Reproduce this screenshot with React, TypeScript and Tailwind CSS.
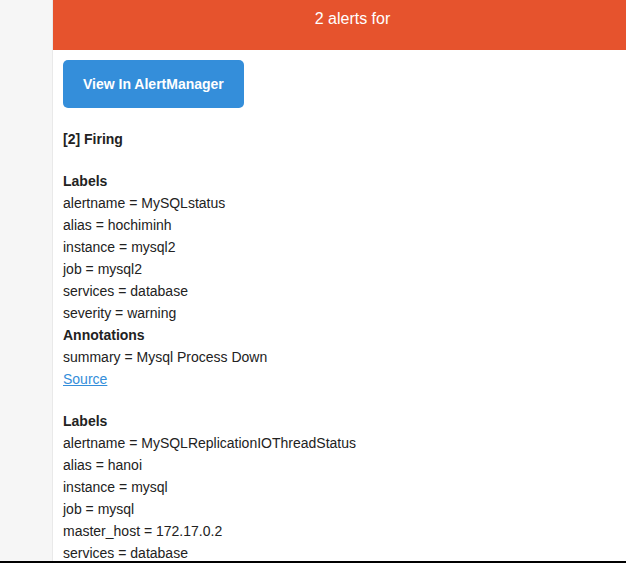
import React from "react";

type Alert = {
  labels: [string, string][];
  annotations: [string, string][];
  source: boolean;
};

// only what fits in the view is listed
const alerts: Alert[] = [
  {
    labels: [
      ["alertname", "MySQLstatus"],
      ["alias", "hochiminh"],
      ["instance", "mysql2"],
      ["job", "mysql2"],
      ["services", "database"],
      ["severity", "warning"],
    ],
    annotations: [["summary", "Mysql Process Down"]],
    source: true,
  },
  {
    labels: [
      ["alertname", "MySQLReplicationIOThreadStatus"],
      ["alias", "hanoi"],
      ["instance", "mysql"],
      ["job", "mysql"],
      ["master_host", "172.17.0.2"],
      ["services", "database"],
    ],
    annotations: [],
    source: false,
  },
];

const App = () => {
  return (
    <div
      className="h-[563px] w-[626px] flex flex-col overflow-hidden bg-[#f6f6f6] text-[14px] leading-[22px] text-[#222]"
      style={{ fontFamily: '"Liberation Sans", Arial, sans-serif' }}
    >
      <div className="flex flex-1 min-h-0 overflow-hidden">
        {/* sidebar */}
        <div className="w-[52px] shrink-0 bg-[#f6f6f6]" />
        {/* main mail body */}
        <div className="w-[600px] shrink-0 bg-white border-l border-[#e9e9e9]">
          <div className="h-[50px] bg-[#e6532d] text-white text-[16px] leading-[26px] text-center pt-[6px]">
            2 alerts for
          </div>
          <div className="p-[10px]">
            <div className="pb-[20px]">
              <a className="inline-block whitespace-nowrap bg-[#348eda] text-white font-bold leading-[28px] px-[20px] py-[10px] rounded-[5px]">
                View In AlertManager
              </a>
            </div>
            <div className="pb-[20px]">
              <strong>[2] Firing</strong>
            </div>
            {alerts.map((alert, i) => (
              <div key={i} className="pb-[20px]">
                <strong>Labels</strong>
                {alert.labels.map(([k, v]) => (
                  <div key={k}>
                    {k} = {v}
                  </div>
                ))}
                {alert.annotations.length > 0 && <strong>Annotations</strong>}
                {alert.annotations.map(([k, v]) => (
                  <div key={k}>
                    {k} = {v}
                  </div>
                ))}
                {alert.source && (
                  <a className="text-[#348eda] underline">Source</a>
                )}
              </div>
            ))}
          </div>
        </div>
      </div>
      <div className="h-[2px] bg-black shrink-0" />
    </div>
  );
};

export default App;
